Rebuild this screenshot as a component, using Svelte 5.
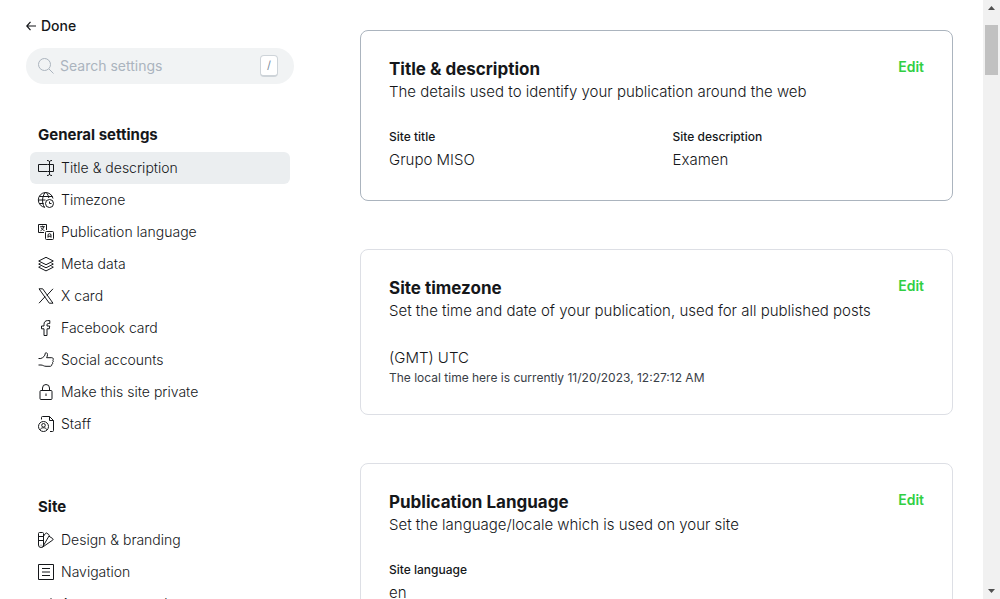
<script>
  const groups = [
    {
      title: 'General settings',
      items: [
        { icon: 'textfield', label: 'Title & description', active: true },
        { icon: 'timezone', label: 'Timezone' },
        { icon: 'language', label: 'Publication language' },
        { icon: 'layers', label: 'Meta data' },
        { icon: 'x', label: 'X card' },
        { icon: 'facebook', label: 'Facebook card' },
        { icon: 'thumb', label: 'Social accounts' },
        { icon: 'lock', label: 'Make this site private' },
        { icon: 'staff', label: 'Staff' }
      ]
    },
    {
      title: 'Site',
      items: [
        { icon: 'palette', label: 'Design & branding' },
        { icon: 'navigation', label: 'Navigation' },
        { icon: 'megaphone', label: 'Announcement bar' }
      ]
    }
  ];

  const cards = [
    {
      title: 'Title & description',
      text: 'The details used to identify your publication around the web',
      active: true,
      fields: [
        { label: 'Site title', value: 'Grupo MISO' },
        { label: 'Site description', value: 'Examen' }
      ]
    },
    {
      title: 'Site timezone',
      text: 'Set the time and date of your publication, used for all published posts',
      fields: [
        { value: '(GMT) UTC', hint: 'The local time here is currently 11/20/2023, 12:27:12 AM' }
      ]
    },
    {
      title: 'Publication Language',
      text: 'Set the language/locale which is used on your site',
      fields: [{ label: 'Site language', value: 'en' }]
    }
  ];
</script>

{#snippet glyph(name)}
  <svg class="icon" viewBox="0 0 16 16" aria-hidden="true">
    {#if name === 'textfield'}
      <path d="M9.500 4.500H.5v7h9M13 4.500h2.500v7H13M11.500 2v12.500M9 .5c1.500 0 2.500.5 2.500 1.500C11.500 1 12.500.5 14 .5M9 15.500c1.500 0 2.500-.5 2.500-1.500 0 1 1 1.500 2.500 1.500M9.500 4.500h4M9.500 11.500h4" />
    {:else if name === 'timezone'}
      <path d="M7 15.300A7.400 7.400 0 1 1 15 6.500M6.500 15.300C3.800 11.500 3.800 4.500 7.200.6M8.300.6c1.400 1.500 2.200 3.400 2.500 5.400M1.400 4.500h13M.6 8h6.900M1.400 11.500h4.300" />
      <circle cx="11.500" cy="11.500" r="4" />
      <path d="M11.500 9.500v2h2" />
    {:else if name === 'language'}
      <path d="M6 8.500H.5v-8h8V6M2.200 2.700h4.600M4.500 1.700v1M2.500 6.800C4 6 5.300 5 5.600 2.700M3.200 3.800C4 5.300 5 6.200 6.500 6.600" />
      <path d="M8.500 7.500h6a1 1 0 0 1 1 1v6a1 1 0 0 1-1 1h-6a1 1 0 0 1-1-1v-6a1 1 0 0 1 1-1zM10 13.700v-2.500a1.500 1.500 0 0 1 3 0v2.500M10 12.200h3" />
    {:else if name === 'layers'}
      <path d="M8 1.300 15.300 5 8 8.700.7 5zM2.500 7.200.7 8.100 8 11.800l7.300-3.700-1.800-.9M2.500 10.300l-1.800.9L8 14.900l7.300-3.700-1.800-.9" />
    {:else if name === 'x'}
      <path d="M1 .8h3.700l10.300 14.400h-3.700zM15 .8 8.900 7.400M1 15.200l6.200-6.700" />
    {:else if name === 'facebook'}
      <path d="M6 15.500V8.800H3.500V6H6V4.500c0-2.500 1.300-3.900 3.600-3.900h2.200v2.900h-1.500c-.9 0-1.300.5-1.300 1.300V6h2.700l-.4 2.800H9v6.700z" />
    {:else if name === 'thumb'}
      <path d="M.5 6.500h2.300C5.500 5.500 7 4 7.300 1.300c.1-1 2.200-.8 2.200 1.200 0 1.200-.3 2-.9 3.200h5.200c1.600 0 2 1.800.9 2.500.9.6.7 2-.2 2.400.4.900 0 1.800-.8 2 .1 1.100-.5 1.700-1.500 1.700H8c-2.300 0-3-1.300-5-1.300H.5" />
    {:else if name === 'lock'}
      <rect x="2" y="6.500" width="12" height="9" rx="1" />
      <path d="M4.500 6.500V4a3.500 3.500 0 0 1 7 0v2.500M8 9.500V12" />
    {:else if name === 'staff'}
      <circle cx="5.500" cy="10.500" r="5" />
      <circle cx="5.500" cy="9.300" r="1.800" />
      <path d="M2.200 13.700c.8-2.600 5.800-2.600 6.600 0M3.500 3.500v-2a1 1 0 0 1 1-1h7l4 4v10a1 1 0 0 1-1 1h-2.500M11.500.5v4h4" />
    {:else if name === 'palette'}
      <path d="M1.500.5h3a1 1 0 0 1 1 1V13a2.500 2.500 0 0 1-5 0V1.500a1 1 0 0 1 1-1zM.5 4.500h5M.5 8.500h5M3 12.800v.7M5.500 4.200l2-2.800a1 1 0 0 1 1.400-.2l1.900 1.400a1 1 0 0 1 .2 1.400L5.200 14M11 4.200l3.600 2.300a1 1 0 0 1 .2 1.500L4.500 15.200" />
    {:else if name === 'navigation'}
      <path d="M.5.5h15v15H.5zM4 4.500h8M4 8h8M4 11.500h8" />
    {:else}
      <path d="M5 6.500c3 0 6-1.500 8-4v11c-2-2.500-5-3-8-3H2.500a2 2 0 0 1 0-4zM5 10.500l1.500 5h2l-1-5" />
    {/if}
  </svg>
{/snippet}

<div class="page">
  <aside>
    <button class="done" type="button">
      <svg viewBox="0 0 10 10" aria-hidden="true"><path d="M4.500.8.8 5l3.700 4.200M.8 5H10" /></svg>
      Done
    </button>
    <label class="search">
      <svg class="icon" viewBox="0 0 16 16" aria-hidden="true">
        <circle cx="6.500" cy="6.500" r="6" /><path d="m11 11 4.500 4.500" />
      </svg>
      <input type="text" placeholder="Search settings" aria-label="Search settings" />
      <kbd>/</kbd>
    </label>
    <nav>
      {#each groups as group}
        <section class="group">
          <h2>{group.title}</h2>
          <ul>
            {#each group.items as item}
              <li>
                <button type="button" class="item" class:active={item.active}>
                  {@render glyph(item.icon)}
                  {item.label}
                </button>
              </li>
            {/each}
          </ul>
        </section>
      {/each}
    </nav>
  </aside>

  <main>
    {#each cards as card}
      <section class="card" class:active={card.active}>
        <header>
          <div>
            <h3>{card.title}</h3>
            <p>{card.text}</p>
          </div>
          <button class="edit" type="button">Edit</button>
        </header>
        <div class="fields" class:two={card.fields.length > 1}>
          {#each card.fields as field}
            <div>
              {#if field.label}<h4>{field.label}</h4>{/if}
              <p class="value">{field.value}</p>
              {#if field.hint}<p class="hint">{field.hint}</p>{/if}
            </div>
          {/each}
        </div>
      </section>
    {/each}
  </main>

  <div class="scrollbar" aria-hidden="true">
    <svg viewBox="0 0 17 17"><path d="M5 10h7L8.500 6z" /></svg>
    <div class="track"><div class="thumb"></div></div>
    <svg viewBox="0 0 17 17"><path d="M5 7h7l-3.500 4z" /></svg>
  </div>
</div>

<style>
  .page {
    display: flex;
    height: 100vh;
    overflow: hidden;
    background: #fff;
    color: #15171a;
    font-family: Inter, sans-serif;
    font-size: 14px;
    line-height: 20px;
  }
  h2, h3, h4, p, ul { margin: 0; padding: 0; }
  ul { list-style: none; }
  button {
    border: 0;
    padding: 0;
    background: none;
    color: inherit;
    font: inherit;
    cursor: pointer;
  }
  svg {
    fill: none;
    stroke: currentColor;
    flex: none;
  }
  .icon { width: 16px; height: 16px; overflow: visible; }

  aside { flex: none; width: 268px; padding: 16px 40px 0 26px; }
  .done {
    display: flex;
    align-items: center;
    gap: 5px;
    font-weight: 500;
  }
  .done svg { width: 10px; height: 10px; stroke-width: 1.2; }
  .search {
    display: flex;
    align-items: center;
    gap: 6px;
    height: 36px;
    margin-top: 12px;
    padding: 0 16px 0 12px;
    border-radius: 18px;
    background: #f1f3f4;
    color: #abb4be;
  }
  .search input {
    flex: 1;
    min-width: 0;
    padding: 0;
    border: 0;
    outline: 0;
    background: none;
    color: #15171a;
    font: inherit;
  }
  .search input::placeholder { color: #abb4be; opacity: 1; }
  kbd {
    box-sizing: border-box;
    width: 18px;
    height: 22px;
    border: 1px solid #ced4d9;
    border-bottom-width: 2px;
    border-radius: 4px;
    background: #fff;
    color: #7c8b9a;
    font: 400 11px/19px Inter, sans-serif;
    text-align: center;
  }
  nav { padding: 40px 4px 0; }
  .group { margin-bottom: 56px; }
  h2 {
    padding: 0 8px;
    margin-bottom: 6px;
    font-size: 15px;
    font-weight: 700;
    line-height: 22px;
  }
  .item {
    display: flex;
    align-items: center;
    gap: 7px;
    width: 100%;
    height: 32px;
    padding: 0 8px;
    border-radius: 6px;
    font-weight: 300;
    text-align: left;
    white-space: nowrap;
  }
  .item.active { background: #ebeef0; }

  main {
    flex: 1;
    min-width: 0;
    display: flex;
    flex-direction: column;
    gap: 48px;
    padding: 30px 30px 0 26px;
  }
  .card {
    flex: none;
    padding: 28px;
    border: 1px solid #dddfe5;
    border-radius: 8px;
  }
  .card.active { border-color: #abb4be; }
  header {
    display: flex;
    justify-content: space-between;
    align-items: flex-start;
    gap: 16px;
  }
  h3 { margin-bottom: 1px; font-size: 17px; font-weight: 700; line-height: 20px; }
  p { font-size: 15px; font-weight: 300; line-height: 24px; }
  .edit { color: #30cf43; font-weight: 600; line-height: 16px; }
  .fields { display: grid; gap: 32px; padding: 23px 0 0; }
  .two { grid-template-columns: 1fr 1fr; }
  h4 { margin-bottom: 1px; font-size: 12px; font-weight: 500; line-height: 20px; }
  .hint { font-size: 12px; font-weight: 400; line-height: 16px; color: #394047; }

  .scrollbar {
    flex: none;
    display: flex;
    flex-direction: column;
    width: 17px;
    background: #f1f1f1;
  }
  .scrollbar svg { width: 17px; height: 17px; fill: #505050; stroke: none; }
  .track { flex: 1; padding: 8px 2px 0; }
  .thumb { height: 50px; background: #c1c1c1; }
</style>
